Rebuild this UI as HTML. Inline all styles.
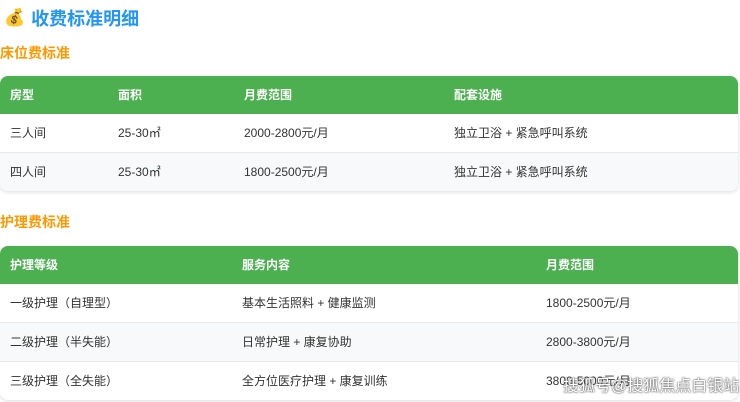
<!DOCTYPE html>
<html><head><meta charset="utf-8"><style>
body{margin:0;width:740px;height:402px;overflow:hidden;background:#fff;font-family:"Liberation Sans","Noto Sans CJK SC",sans-serif;position:relative}
.t{position:absolute;left:4px;top:5px;font-size:18px;font-weight:bold;color:#2196f3;display:flex;align-items:center}
.s{position:absolute;left:0;font-size:14px;font-weight:bold;color:#ff9800}
.tb{position:absolute;left:0;width:738px;border-radius:8px;overflow:hidden;box-shadow:0 1px 4px rgba(0,0,0,.15);background:#fff}
.r{position:relative;height:38px;border-bottom:1px solid #e8e8e8;font-size:12px;color:#333}
.r span{position:absolute;top:0;line-height:38px}
.h{background:#4caf50;color:#fff;font-weight:bold;border:none}
.a{background:#f8f9fa}
.w{position:absolute;left:563px;top:372px;font-size:16px;color:#fff;white-space:nowrap;text-shadow:0 0 2px #555,0 0 1px #333}
</style></head><body>
<div class="t"><span style="font-size:17px;margin-right:6px">💰</span>收费标准明细</div>
<div class="s" style="top:43px">床位费标准</div>
<div class="tb" style="top:76px">
<div class="r h"><span style="left:10px">房型</span><span style="left:118px">面积</span><span style="left:244px">月费范围</span><span style="left:454px">配套设施</span></div>
<div class="r"><span style="left:10px">三人间</span><span style="left:118px">25-30㎡</span><span style="left:244px">2000-2800元/月</span><span style="left:454px">独立卫浴 + 紧急呼叫系统</span></div>
<div class="r a" style="border:none"><span style="left:10px">四人间</span><span style="left:118px">25-30㎡</span><span style="left:244px">1800-2500元/月</span><span style="left:454px">独立卫浴 + 紧急呼叫系统</span></div>
</div>
<div class="s" style="top:212px">护理费标准</div>
<div class="tb" style="top:246px">
<div class="r h"><span style="left:10px">护理等级</span><span style="left:242px">服务内容</span><span style="left:546px">月费范围</span></div>
<div class="r"><span style="left:10px">一级护理（自理型）</span><span style="left:242px">基本生活照料 + 健康监测</span><span style="left:546px">1800-2500元/月</span></div>
<div class="r a"><span style="left:10px">二级护理（半失能）</span><span style="left:242px">日常护理 + 康复协助</span><span style="left:546px">2800-3800元/月</span></div>
<div class="r" style="border:none"><span style="left:10px">三级护理（全失能）</span><span style="left:242px">全方位医疗护理 + 康复训练</span><span style="left:546px">3800-5000元/月</span></div>
</div>
<div class="w">搜狐号@搜狐焦点白银站</div>
</body></html>
